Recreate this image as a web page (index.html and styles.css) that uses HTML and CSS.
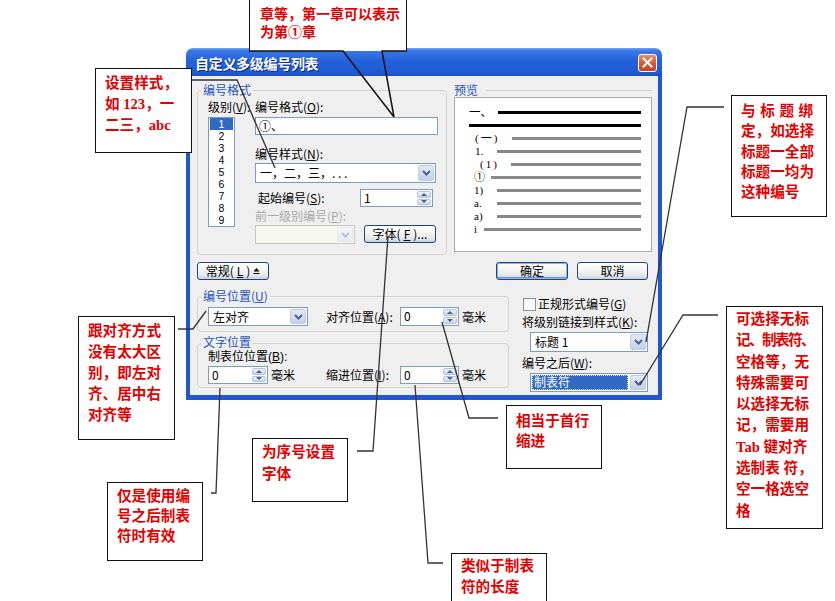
FILE: index.html
```html
<!DOCTYPE html>
<html lang="zh-CN">
<head>
<meta charset="utf-8">
<title>自定义多级编号列表</title>
<link rel="stylesheet" href="styles.css">
</head>
<body>
<div class="canvas">

  <div class="dialog">
    <div class="titlebar">
      <span class="title">自定义多级编号列表</span>
      <span class="close"><svg width="17" height="16" viewBox="0 0 17 16"><path d="M4.5 3.5 L12.5 11.5 M12.5 3.5 L4.5 11.5" stroke="#fff" stroke-width="2" stroke-linecap="square"/></svg></span>
    </div>
    <div class="dbody">
      <div class="row-top">
        <fieldset class="grp grp-fmt">
          <legend>编号格式</legend>
          <div class="fmt">
            <div class="levelcol">
              <div class="lbl">级别(<u>V</u>):</div>
              <ul class="listbox">
                <li class="sel">1</li><li>2</li><li>3</li><li>4</li><li>5</li><li>6</li><li>7</li><li>8</li><li>9</li>
              </ul>
            </div>
            <div class="fmtcol">
              <div class="lbl">编号格式(<u>O</u>):</div>
              <div class="textbox">①、</div>
              <div class="lbl lbl-style">编号样式(<u>N</u>):</div>
              <div class="combo combo-style"><span class="cval">一，二，三，. . .</span><span class="arr"><svg width="9" height="6" viewBox="0 0 9 6"><polyline points="1,1 4.5,4.5 8,1" fill="none" stroke="#4D6185" stroke-width="2"/></svg></span></div>
              <div class="startrow">
                <span class="lbl start-lbl">起始编号(<u>S</u>):</span>
                <div class="spin spin-start"><span class="sval">1</span><span class="sbtns"><i class="up"></i><i class="dn"></i></span></div>
              </div>
              <div class="lbl dis">前一级别编号(<u>P</u>):</div>
              <div class="fontrow">
                <div class="combo combo-dis"><span class="cval"></span><span class="arr"><svg width="9" height="6" viewBox="0 0 9 6"><polyline points="1,1 4.5,4.5 8,1" fill="none" stroke="#B9C3D6" stroke-width="2"/></svg></span></div>
                <button class="btn btn-font">字体(<u>F</u>)...</button>
              </div>
            </div>
          </div>
        </fieldset>
        <div class="pgrp">
          <div class="phead"><span>预览</span><span class="hline"></span></div>
          <div class="preview">
            <div class="pr r1"><span>一、</span><i class="bl"></i></div>
            <div class="pr r2"><i class="bl"></i></div>
            <div class="pr r3"><span>(一)</span><i></i></div>
            <div class="pr r4"><span>1.</span><i></i></div>
            <div class="pr r5"><span>(1)</span><i></i></div>
            <div class="pr r6"><span>①</span><i></i></div>
            <div class="pr r7"><span>1)</span><i></i></div>
            <div class="pr r8"><span>a.</span><i></i></div>
            <div class="pr r9"><span>a)</span><i></i></div>
            <div class="pr r10"><span>i</span><i></i></div>
          </div>
        </div>
      </div>

      <div class="row-btns">
        <button class="btn">常规(<u>L</u>) <svg width="7" height="8" viewBox="0 0 7 8"><polygon points="3.5,1 6.5,4.5 0.5,4.5" fill="#000"/><rect x="0.5" y="6" width="6" height="1" fill="#000"/></svg></button>
        <button class="btn def ok">确定</button>
        <button class="btn cancel">取消</button>
      </div>

      <div class="row-bottom">
        <div class="leftcol">
          <fieldset class="grp grp-pos">
            <legend>编号位置(<u>U</u>)</legend>
            <div class="pgrid">
              <div class="combo combo-align"><span class="cval">左对齐</span><span class="arr"><svg width="9" height="6" viewBox="0 0 9 6"><polyline points="1,1 4.5,4.5 8,1" fill="none" stroke="#4D6185" stroke-width="2"/></svg></span></div>
              <span class="lbl">对齐位置(<u>A</u>):</span>
              <div class="spin spin-sm"><span class="sval">0</span><span class="sbtns"><i class="up"></i><i class="dn"></i></span></div>
              <span class="mm">毫米</span>
            </div>
          </fieldset>
          <fieldset class="grp grp-text">
            <legend>文字位置</legend>
            <div class="lbl tab-lbl">制表位位置(<u>B</u>):</div>
            <div class="pgrid tgrid">
              <div class="tabcell">
                <div class="spin spin-tab"><span class="sval">0</span><span class="sbtns"><i class="up"></i><i class="dn"></i></span></div>
                <span class="mm">毫米</span>
              </div>
              <span class="lbl">缩进位置(<u>I</u>):</span>
              <div class="spin spin-sm"><span class="sval">0</span><span class="sbtns"><i class="up"></i><i class="dn"></i></span></div>
              <span class="mm">毫米</span>
            </div>
          </fieldset>
        </div>
        <div class="rightcol">
          <div class="chkrow"><span class="chk"></span><span class="lbl">正规形式编号(<u>G</u>)</span></div>
          <div class="lbl link-lbl">将级别链接到样式(<u>K</u>):</div>
          <div class="combo combo-right"><span class="cval">标题 1</span><span class="arr"><svg width="9" height="6" viewBox="0 0 9 6"><polyline points="1,1 4.5,4.5 8,1" fill="none" stroke="#4D6185" stroke-width="2"/></svg></span></div>
          <div class="lbl after-lbl">编号之后(<u>W</u>):</div>
          <div class="combo combo-right combo-after"><span class="cval"><span class="selval">制表符</span></span><span class="arr"><svg width="9" height="6" viewBox="0 0 9 6"><polyline points="1,1 4.5,4.5 8,1" fill="none" stroke="#4D6185" stroke-width="2"/></svg></span></div>
        </div>
      </div>
    </div>
  </div>

  <div class="note n-top"><div>章等，第一章可以表示</div><div>为第①章</div></div>
  <div class="note n-left"><div>设置样式，</div><div>如 <span class="lat">123</span>，一</div><div>二三，<span class="lat">abc</span></div></div>
  <div class="note n-rtop"><div class="spread">与标题绑</div><div>定，如选择</div><div>标题一全部</div><div>标题一均为</div><div>这种编号</div></div>
  <div class="note n-rbot"><div>可选择无标</div><div class="tight">记、制表符、</div><div>空格等，无</div><div>特殊需要可</div><div>以选择无标</div><div>记，需要用</div><div><span class="lat">Tab</span> 键对齐</div><div>选制表 符，</div><div>空一格选空</div><div>格</div></div>
  <div class="note n-lmid"><div>跟对齐方式</div><div>没有太大区</div><div>别，即左对</div><div>齐、居中右</div><div>对齐等</div></div>
  <div class="note n-tabonly"><div>仅是使用编</div><div>号之后制表</div><div>符时有效</div></div>
  <div class="note n-font"><div>为序号设置</div><div>字体</div></div>
  <div class="note n-indent"><div>相当于首行</div><div>缩进</div></div>
  <div class="note n-tablen"><div>类似于制表</div><div>符的长度</div></div>

  <svg class="wires" width="835" height="601" viewBox="0 0 835 601">
    <path class="box" d="M249,51 H343 L394,117 L382,51 H407"/>
    <path d="M192,80 H237 L275,168"/>
    <path d="M724,107 H687 L646,342"/>
    <path d="M718,315 H683 L640,385"/>
    <path d="M178,329 H193 L206,311"/>
    <path d="M211,493 H216 L220,388"/>
    <path d="M357,451 H373 L388,236"/>
    <path d="M498,418 H469 L442,322"/>
    <path d="M443,563 H428 L415,385"/>
  </svg>
</div>
</body>
</html>
```

FILE: styles.css
```css
* { box-sizing: border-box; }
html, body { margin: 0; padding: 0; background: #fff; }
body {
  font-family: "Noto Sans CJK SC", "Noto Sans", sans-serif;
  font-size: 12px;
  color: #000;
}
.canvas {
  position: relative;
  width: 835px;
  height: 601px;
  overflow: hidden;
  background: #fff;
}

/* ---------- dialog window ---------- */
.dialog {
  position: absolute;
  left: 186px;
  top: 48px;
  width: 476px;
  height: 352px;
  display: flex;
  flex-direction: column;
}
.titlebar {
  flex: none;
  height: 28px;
  border-radius: 7px 7px 0 0;
  background: linear-gradient(#6FA2F4 0%, #3A78E6 10%, #2462DB 45%, #1F5BD5 85%, #1A4FC2 100%);
  display: flex;
  align-items: center;
  justify-content: space-between;
  padding: 2px 5px 0 9px;
}
.title {
  color: #fff;
  font-weight: bold;
  font-size: 14px;
  letter-spacing: -0.3px;
  text-shadow: 1px 1px 0 #0C2A80;
}
.close {
  width: 19px;
  height: 18px;
  border: 1px solid #fff;
  border-radius: 3px;
  background: linear-gradient(#EE8B68 0%, #DB5D36 50%, #C5411F 100%);
  display: flex;
  align-items: center;
  justify-content: center;
}
.dbody {
  flex: 1;
  background: #EFEFEF;
  border: 4px solid #2058D4;
  border-top: 0;
  border-bottom-width: 5px;
  padding: 7px 6px 0 7px;
}

/* ---------- generic controls ---------- */
.lbl { line-height: 14px; white-space: nowrap; }
.lbl.dis { color: #A8A8A8; }
u { text-decoration: underline; }

.grp {
  margin: 0;
  min-width: 0;
  border: 1px solid #D3D3CC;
  border-radius: 4px;
}
.grp legend {
  padding: 0 2px;
  margin-left: -7px;
  line-height: 14px;
  font-size: 12px;
  color: #2454C4;
  white-space: nowrap;
}
.grp-text legend, .tab-lbl {
  font-family: "Liberation Sans", "Noto Sans CJK SC", sans-serif;
}

.textbox {
  height: 18px;
  border: 1px solid #7F9DB9;
  background: #fff;
  padding-left: 3px;
  line-height: 16px;
}
.combo {
  display: flex;
  border: 1px solid #7F9DB9;
  background: #fff;
}
.cval {
  flex: 1;
  padding-left: 4px;
  line-height: 16px;
  white-space: nowrap;
  overflow: hidden;
  display: flex;
  align-items: center;
}
.arr {
  flex: none;
  width: 16px;
  margin: 1px;
  border: 1px solid #BCCBEA;
  border-radius: 2px;
  background: linear-gradient(#E3EAF8, #C3D0EA);
  display: flex;
  align-items: center;
  justify-content: center;
}
.combo-dis { border-color: #C9C7BA; background: #F7F7F4; }
.combo-dis .arr { border-color: #E2E6EE; background: linear-gradient(#F4F6FA, #E6EAF2); }

.spin {
  display: flex;
  height: 18px;
  border: 1px solid #7F9DB9;
  background: #fff;
}
.sval { flex: 1; padding-left: 3px; line-height: 16px; }
.sbtns {
  flex: none;
  width: 16px;
  padding: 1px;
  display: flex;
  flex-direction: column;
  gap: 1px;
}
.sbtns i {
  flex: 1;
  border: 1px solid #B5C3E2;
  border-radius: 2px;
  background: linear-gradient(#EEF2FB, #C9D4EC);
  display: flex;
  align-items: center;
  justify-content: center;
}
.sbtns i.up::after {
  content: "";
  border-left: 3px solid transparent;
  border-right: 3px solid transparent;
  border-bottom: 3px solid #4D6185;
}
.sbtns i.dn::after {
  content: "";
  border-left: 3px solid transparent;
  border-right: 3px solid transparent;
  border-top: 3px solid #4D6185;
}

.btn {
  font-family: "Noto Sans CJK SC", "Noto Sans", sans-serif;
  font-size: 12px;
  color: #000;
  width: 72px;
  height: 18px;
  padding: 0;
  line-height: 16px;
  border: 1px solid #23417A;
  border-radius: 3px;
  background: linear-gradient(#FFFFFF 0%, #F4F4F1 45%, #E3E6EC 80%, #C7CFDE 100%);
  display: flex;
  align-items: center;
  justify-content: center;
  gap: 3px;
}
.btn.def { box-shadow: inset 0 0 0 1px #8FB1EC, inset 0 -1px 0 1px #6C93D8; }

/* ---------- top row ---------- */
.row-top { display: flex; gap: 7px; }
.grp-fmt {
  width: 250px;
  height: 172px;
  padding: 3px 8px 9px 10px;
}
.fmt { display: flex; }
.levelcol { width: 47px; flex: none; }
.listbox {
  list-style: none;
  margin: 3px 0 0 0;
  padding: 0;
  width: 27px;
  height: 110px;
  border: 1px solid #7F9DB9;
  background: #fff;
  font-family: "Liberation Sans", "Noto Sans CJK SC", sans-serif;
  font-size: 10.5px;
}
.listbox li {
  height: 12px;
  line-height: 12px;
  margin: 0 1px;
  text-align: center;
}
.listbox li.sel { background: #316AC5; color: #fff; }
.fmtcol { width: 183px; flex: none; }
.textbox { margin-top: 3px; width: 183px; }
.lbl-style { margin-top: 12px; }
.combo-style { margin-top: 2px; width: 181px; height: 20px; }
.startrow { margin-top: 6px; display: flex; align-items: center; }
.start-lbl { width: 105px; padding-left: 3px; }
.spin-start { width: 73px; }
.lbl.dis { margin-top: 2px; }
.fontrow { margin-top: 2px; display: flex; align-items: flex-start; gap: 9px; }
.combo-dis { width: 100px; height: 19px; }

.pgrp { width: 198px; flex: none; }
.phead { display: flex; align-items: center; height: 14px; line-height: 14px; color: #2454C4; }
.phead .hline { flex: 1; height: 1px; background: #D3D3CC; margin-left: 8px; }
.preview {
  height: 155px;
  border: 1px solid #A9A9A9;
  background: #fff;
  padding: 8px 10px 0 0;
}
.pr { display: flex; align-items: center; height: 13px; }
.pr span {
  flex: none;
  line-height: 13px;
  font-size: 11px;
  white-space: nowrap;
  font-family: "Liberation Serif", "Noto Sans CJK SC", serif;
}
.pr i { flex: 1; height: 3px; background: #878787; }
.pr i.bl { background: #000; }
.r1 { padding-left: 14px; } .r1 span { width: 29px; font-size: 11.5px; }
.r2 { padding-left: 14px; }
.r3 { padding-left: 20px; } .r3 span { width: 37px; letter-spacing: 2px; }
.r4 { padding-left: 20px; } .r4 span { width: 22px; }
.r5 { padding-left: 25px; } .r5 span { width: 31px; letter-spacing: 2px; }
.r6 { padding-left: 19px; } .r6 span { width: 17px; }
.r7, .r8, .r9 { padding-left: 19px; }
.r7 span, .r8 span, .r9 span { width: 23px; }
.r10 { padding-left: 19px; } .r10 span { width: 10px; }

/* ---------- buttons row ---------- */
.row-btns {
  display: flex;
  gap: 9px;
  margin-top: 7px;
  padding-right: 4px;
  width: 455px;
}
.row-btns .ok { margin-left: auto; }
.row-btns .cancel { width: 71px; }

/* ---------- bottom row ---------- */
.row-bottom { display: flex; margin-top: 9px; }
.leftcol { width: 312px; flex: none; }
.grp-pos { padding: 4px 8px 5px 10px; }
.grp-text { margin-top: 4px; padding: 0 8px 3px 10px; }
.pgrid {
  display: grid;
  grid-template-columns: 118px 74px 59px auto;
  align-items: center;
}
.tgrid { margin-top: 2px; }
.combo-align { width: 100px; height: 19px; }
.spin-sm { width: 59px; }
.grp-pos .spin-sm { height: 19px; }
.mm { margin-left: 3px; line-height: 14px; }
.tabcell { display: flex; align-items: center; }
.spin-tab { width: 60px; }

.rightcol { width: 126px; margin-left: 13px; padding-top: 8px; }
.chkrow { display: flex; align-items: center; height: 14px; }
.chk {
  width: 13px;
  height: 13px;
  margin-left: 1px;
  margin-right: 2px;
  border: 1px solid #8A8F99;
  background: linear-gradient(135deg, #F2F2EE, #FFFFFF);
}
.link-lbl { margin-top: 4px; }
.combo-right { margin-top: 3px; margin-left: 8px; width: 118px; height: 20px; }
.after-lbl { margin-top: 4px; }
.combo-after { height: 19px; }
.combo-after .cval { padding: 1px; }
.selval {
  flex: 1;
  height: 15px;
  line-height: 14px;
  background: #316AC5;
  color: #fff;
  padding-left: 2px;
  outline: 1px dotted #E0E0E0;
  outline-offset: -1px;
}

/* ---------- annotation callouts ---------- */
.note {
  position: absolute;
  z-index: 2;
  background: #fff;
  border: 1.5px solid #111;
  color: #E50000;
  font-family: "Liberation Serif", "Noto Sans CJK SC", serif;
  font-weight: bold;
  font-size: 14.6px;
  line-height: 21px;
  white-space: nowrap;
}
.note .lat { font-family: "Liberation Serif", serif; }
.n-top {
  left: 249px; top: -5px; width: 158px; height: 56px;
  border-bottom: 0;
  font-size: 14px;
  line-height: 18px;
  padding: 10px 0 0 10px;
}
.n-left { left: 95px; top: 68px; width: 97px; height: 85px; padding: 4px 0 0 9px; }
.n-rtop { left: 731px; top: 95px; width: 96px; height: 122px; padding: 5px 0 0 9px; line-height: 20.3px; }
.n-rtop .spread { letter-spacing: 4.6px; }
.n-rbot { left: 726px; top: 306px; width: 97px; height: 223px; padding: 2px 0 0 9px; line-height: 21.3px; }
.n-rbot .tight { letter-spacing: -1.6px; }
.n-lmid { left: 78px; top: 316px; width: 97px; height: 124px; padding: 4px 0 0 9px; }
.n-tabonly { left: 107px; top: 482px; width: 96px; height: 79px; padding: 3px 0 0 9px; line-height: 20px; }
.n-font { left: 252px; top: 438px; width: 96px; height: 64px; padding: 2px 0 0 9px; line-height: 22px; }
.n-indent { left: 506px; top: 405px; width: 96px; height: 64px; padding: 5px 0 0 9px; line-height: 20px; }
.n-tablen { left: 451px; top: 553px; width: 96px; height: 52px; padding: 2px 0 0 9px; }

.wires {
  position: absolute;
  left: 0;
  top: 0;
  z-index: 3;
  pointer-events: none;
}
.wires path {
  fill: none;
  stroke: #333;
  stroke-width: 1.3;
}
.wires path.box { stroke: #111; stroke-width: 1.5; }
```
